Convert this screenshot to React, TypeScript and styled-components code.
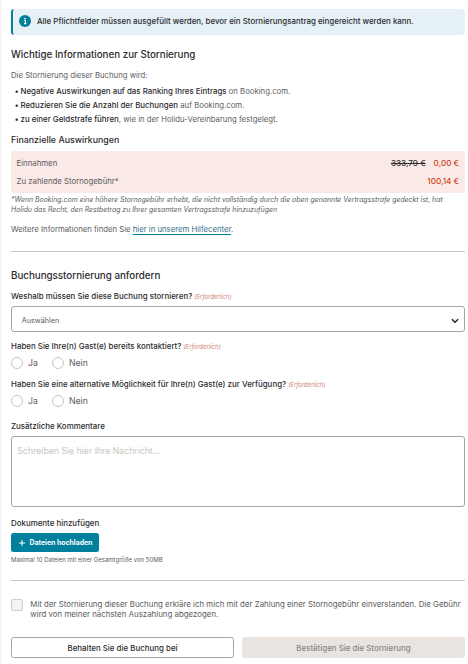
import React from 'react';
import styled, { createGlobalStyle } from 'styled-components';

const GlobalStyle = createGlobalStyle`
  *, *::before, *::after { box-sizing: border-box; }
  body {
    margin: 0;
    background: #fff;
    color: #5c5c60;
    font-family: Inter, "Liberation Sans", sans-serif;
    font-size: 7.8px;
  }
  button, textarea, input { font-family: inherit; margin: 0; }
`;

const Page = styled.main`
  width: 468px;
  height: 664px;
  overflow: hidden;
  border-left: 1px solid #f3f3f3;
  padding: 9px 3px 0 10px;
`;

const Alert = styled.div`
  display: flex;
  align-items: center;
  gap: 6px;
  height: 26px;
  padding: 0 6px 3px;
  border-left: 2px solid #00809d;
  border-radius: 3px;
  background: #e5f1f6;
  color: #2b2b2e;
  font-size: 7.92px;
  font-weight: 500;
  line-height: 12px;
  white-space: nowrap;
`;

const Icon = styled.svg`
  display: block;
  flex: none;
`;

const AlertText = styled.span`
  padding-top: 1px;
`;

const Title = styled.h2<{ $top: number }>`
  margin: ${(p) => p.$top}px 0 0;
  color: #2b2b2e;
  font-size: 9.78px;
  font-weight: 500;
  line-height: 14px;
`;

const Subtitle = styled.h3`
  margin: 7px 0 0;
  color: #2b2b2e;
  font-size: 8.84px;
  font-weight: 500;
  line-height: 14px;
`;

const Text = styled.p<{ $top: number }>`
  margin: ${(p) => p.$top}px 0 0;
  font-size: 7.74px;
  line-height: 14px;
  white-space: nowrap;
`;

const Bullets = styled.ul`
  list-style: none;
  margin: 1px 0 0;
  padding: 0 0 0 3.5px;
`;

const Bullet = styled.li`
  display: flex;
  font-size: 7.75px;
  line-height: 14px;
  white-space: pre;

  &::before {
    content: "•";
    width: 6px;
    color: #2b2b2e;
  }
`;

const Strong = styled.strong`
  color: #2b2b2e;
  font-size: 7.88px;
  font-weight: 500;
`;

const Costs = styled.div`
  height: 42px;
  margin-top: 4px;
  padding: 3px 6px;
  border-radius: 3px;
  background: #faeae7;
`;

const CostRow = styled.div`
  display: flex;
  gap: 8px;
  line-height: 18px;
  font-size: 7.8px;
`;

const CostLabel = styled.span`
  flex: 1;
  margin-left: -0.5px;
`;

const Amount = styled.span<{ $old?: boolean }>`
  color: ${(p) => (p.$old ? '#2b2b2e' : '#d23f14')};
  font-size: 8.15px;
  font-weight: 500;
  text-decoration: ${(p) => (p.$old ? 'line-through' : 'none')};
`;

const Footnote = styled.p`
  margin: 2px 0 0;
  font-size: 6.91px;
  font-style: italic;
  line-height: 10px;
  white-space: nowrap;
`;

const Link = styled.a`
  color: #3b6f88;
  text-decoration: underline;
  text-decoration-color: #00809d;
  text-decoration-thickness: 1px;
  text-underline-offset: 1.5px;
`;

const Divider = styled.hr<{ $top: number }>`
  height: 1px;
  margin: ${(p) => p.$top}px 0 0;
  border: 0;
  background: #c8c8c8;
`;

const Label = styled.div<{ $top: number }>`
  margin-top: ${(p) => p.$top}px;
  color: #2b2b2e;
  font-size: 7.92px;
  font-weight: 500;
  line-height: 12px;
  white-space: nowrap;
`;

const Required = styled.em`
  margin-left: 2px;
  color: #d08476;
  font-size: 5.96px;
  font-weight: 400;
  vertical-align: 0.5px;
  line-height: 1;
`;

const Select = styled.div`
  display: flex;
  align-items: center;
  justify-content: space-between;
  height: 26px;
  margin-top: 4px;
  padding: 3px 5px 0 9.7px;
  border: 1px solid #aaa5a1;
  border-radius: 3px;
  font-size: 7.26px;
`;

const Radios = styled.div`
  display: flex;
  height: 12px;
  margin-top: 5px;
`;

const RadioLabel = styled.label`
  display: flex;
  align-items: center;
  gap: 5px;
  width: 41px;
  font-size: 8.7px;
  line-height: 12px;
`;

const Radio = styled.input.attrs({ type: 'radio' })`
  appearance: none;
  flex: none;
  width: 12px;
  height: 12px;
  border: 1px solid #c8c4c0;
  border-radius: 50%;
  background: #fff;
`;

const Message = styled.textarea`
  display: block;
  width: 100%;
  height: 71px;
  margin-top: 4px;
  padding: 8px 5.5px;
  border: 1px solid #aaa5a1;
  border-radius: 3px;
  resize: none;
  font-size: 8.7px;
  line-height: 12px;

  &::placeholder { color: #c9c5c0; }
`;

const Upload = styled.button`
  display: flex;
  align-items: center;
  gap: 4.5px;
  width: 88px;
  height: 19px;
  margin-top: 4px;
  padding: 0 0 0 8px;
  border: 0;
  border-radius: 2.5px;
  background: #00809d;
  color: #fff;
  font-size: 6.9px;
  font-weight: 700;
  white-space: nowrap;
`;

const Hint = styled.p`
  margin: 3px 0 0;
  font-size: 6px;
  line-height: 10px;
`;

const Consent = styled.label`
  display: flex;
  gap: 7.3px;
  margin-top: 18px;
  font-size: 7.88px;
  line-height: 10px;
  white-space: nowrap;
`;

const Checkbox = styled.input.attrs({ type: 'checkbox' })`
  appearance: none;
  flex: none;
  width: 12px;
  height: 12px;
  border: 1px solid #d0ccc8;
  border-radius: 2px;
  background: #f5f3f1;
`;

const Actions = styled.div`
  display: grid;
  grid-template-columns: 223px 223px;
  gap: 8px;
  margin-top: 18px;
`;

const Action = styled.button<{ $muted?: boolean }>`
  height: 21px;
  padding: 1px 0 0;
  border: ${(p) => (p.$muted ? '0' : '1px solid #a5a5a5')};
  border-radius: 2.5px;
  background: ${(p) => (p.$muted ? '#e9e4e0' : '#fff')};
  color: ${(p) => (p.$muted ? '#8a8580' : '#2b2b2e')};
  font-size: 7.92px;
  font-weight: 500;
`;

function Question({ name, top, children }: { name: string; top: number; children: React.ReactNode }) {
  return (
    <>
      <Label $top={top}>
        {children}
        <Required>(Erforderlich)</Required>
      </Label>
      <Radios>
        <RadioLabel><Radio name={name} />Ja</RadioLabel>
        <RadioLabel><Radio name={name} />Nein</RadioLabel>
      </Radios>
    </>
  );
}

export default function App() {
  return (
    <>
      <GlobalStyle />
      <Page>
        <Alert>
          <Icon width="12" height="12" viewBox="0 0 12 12">
            <circle cx="6" cy="6" r="6" fill="#00809d" />
            <circle cx="6" cy="3.5" r=".85" fill="#fff" />
            <path d="M5.2 5.4h1.2v3M5 8.600h2.3" fill="none" stroke="#fff" strokeWidth="1.1" />
          </Icon>
          <AlertText>
            Alle Pflichtfelder müssen ausgefüllt werden, bevor ein Stornierungsantrag eingereicht werden kann.
          </AlertText>
        </Alert>

        <Title $top={13}>Wichtige Informationen zur Stornierung</Title>
        <Text $top={7}>Die Stornierung dieser Buchung wird:</Text>
        <Bullets>
          <Bullet><Strong>Negative Auswirkungen auf das Ranking Ihres Eintrags</Strong> on Booking.com.</Bullet>
          <Bullet><Strong>Reduzieren Sie die Anzahl der Buchungen</Strong> auf Booking.com.</Bullet>
          <Bullet><Strong>zu einer Geldstrafe führen</Strong>, wie in der Holidu-Vereinbarung festgelegt.</Bullet>
        </Bullets>

        <Subtitle>Finanzielle Auswirkungen</Subtitle>
        <Costs>
          <CostRow>
            <CostLabel>Einnahmen</CostLabel>
            <Amount $old>333,79 €</Amount>
            <Amount>0,00 €</Amount>
          </CostRow>
          <CostRow>
            <CostLabel>Zu zahlende Stornogebühr*</CostLabel>
            <Amount>100,14 €</Amount>
          </CostRow>
        </Costs>
        <Footnote>
          *Wenn Booking.com eine höhere Stornogebühr erhebt, die nicht vollständig durch die oben genannte Vertragsstrafe gedeckt ist, hat
          <br />
          Holidu das Recht, den Restbetrag zu Ihrer gesamten Vertragsstrafe hinzuzufügen
        </Footnote>
        <Text $top={8}>
          Weitere Informationen finden Sie <Link>hier in unserem Hilfecenter</Link>.
        </Text>
        <Divider $top={14} />

        <Title $top={17}>Buchungsstornierung anfordern</Title>
        <Label $top={7}>
          Weshalb müssen Sie diese Buchung stornieren?
          <Required>(Erforderlich)</Required>
        </Label>
        <Select>
          Auswählen
          <Icon width="8" height="6" viewBox="0 0 8 6">
            <path d="M.9 1.2 4 4.2l3.1-3" fill="none" stroke="#222" strokeWidth="1.4" />
          </Icon>
        </Select>

        <Question name="contacted" top={8}>Haben Sie Ihre(n) Gast(e) bereits kontaktiert?</Question>
        <Question name="alternative" top={9}>
          Haben Sie eine alternative Möglichkeit für Ihre(n) Gast(e) zur Verfügung?
        </Question>

        <Label $top={13}>Zusätzliche Kommentare</Label>
        <Message placeholder="Schreiben Sie hier Ihre Nachricht..." />

        <Label $top={10}>Dokumente hinzufügen</Label>
        <Upload>
          <Icon width="6" height="6" viewBox="0 0 6 6">
            <path d="M3 0v6M0 3h6" stroke="#fff" strokeWidth="1" />
          </Icon>
          Dateien hochladen
        </Upload>
        <Hint>Maximal 10 Dateien mit einer Gesamtgröße von 50MB</Hint>
        <Divider $top={15} />

        <Consent>
          <Checkbox />
          <span>
            Mit der Stornierung dieser Buchung erkläre ich mich mit der Zahlung einer Stornogebühr einverstanden. Die Gebühr
            <br />
            wird von meiner nächsten Auszahlung abgezogen.
          </span>
        </Consent>
        <Actions>
          <Action>Behalten Sie die Buchung bei</Action>
          <Action $muted disabled>Bestätigen Sie die Stornierung</Action>
        </Actions>
      </Page>
    </>
  );
}
